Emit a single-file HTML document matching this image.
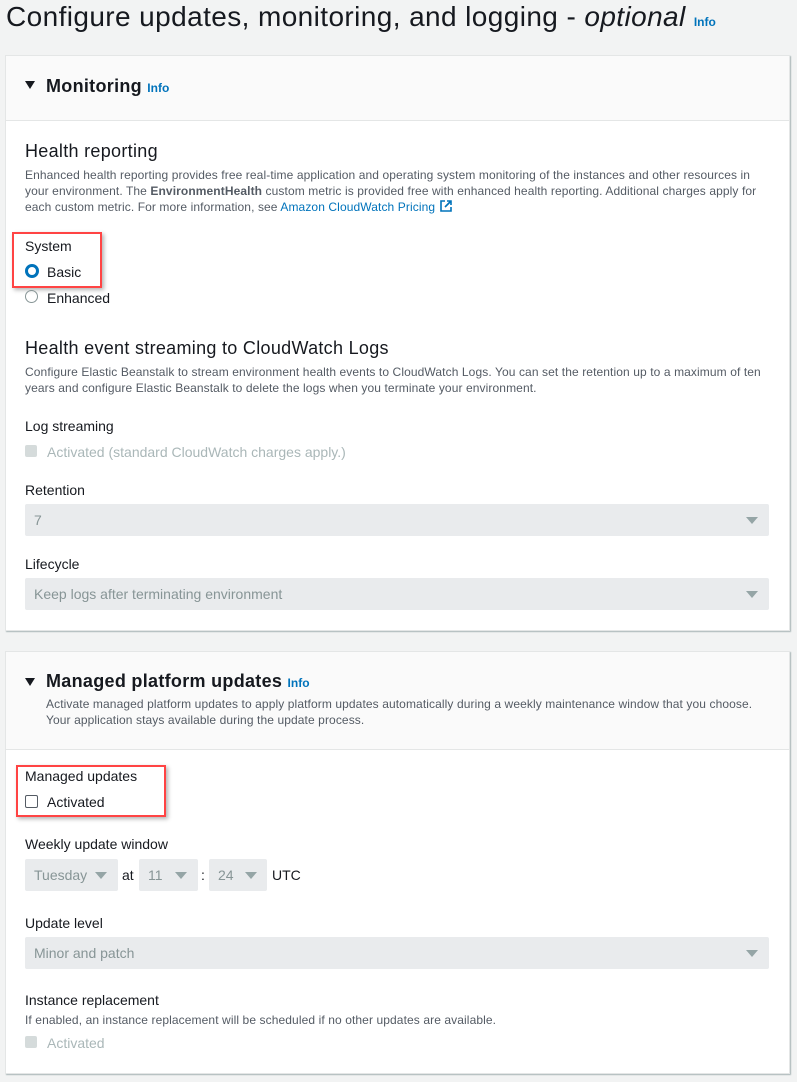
<!DOCTYPE html>
<html><head><style>
body{margin:0;width:797px;height:1082px;background:#f2f3f3;font-family:"Liberation Sans",sans-serif;color:#16191f;position:relative;overflow:hidden}
.a{position:absolute;white-space:nowrap}
.panel{position:absolute;left:5px;width:783px;background:#fff;border:1px solid #e4e6e6;box-shadow:1px 1px 1px #aab7b8}
.hd{position:absolute;left:0;top:0;width:783px;background:#fafafa;border-bottom:1px solid #e4e6e6}
.info{color:#0073bb;font-size:12px;font-weight:bold;letter-spacing:0}
.lbl{font-size:14px}
.desc{font-size:12px;color:#545b64;line-height:16px;letter-spacing:0.1px}
.sel{position:absolute;background:#e9ebed;border-radius:2px;color:#879596;font-size:14px}
.sel span{position:absolute;left:9px;top:8px}
.tri{position:absolute;width:0;height:0;border-left:6px solid transparent;border-right:6px solid transparent;border-top:7px solid #95a5a6}
.red{position:absolute;border:2px solid #f44;box-shadow:2px 2px 4px rgba(0,0,0,.3)}
.cb{position:absolute;width:12px;height:12px;border-radius:2px}
</style></head><body>
<div class="a" style="left:6px;top:0;font-size:28px;line-height:34px;color:#16191f;letter-spacing:0.4px">Configure updates, monitoring, and logging - <i>optional</i> <span class="info" style="font-size:12px">Info</span></div>

<div class="panel" style="top:55px;height:574px">
<div class="hd" style="height:64px"></div>
</div>
<div class="a" style="left:25px;top:81px;width:0;height:0;border-left:5px solid transparent;border-right:5px solid transparent;border-top:8px solid #16191f"></div>
<div class="a" style="left:46px;top:76px;font-size:18px;font-weight:bold;letter-spacing:0.3px">Monitoring <span class="info">Info</span></div>
<div class="a" style="left:25px;top:141px;font-size:18px;letter-spacing:0.3px">Health reporting</div>
<div class="a desc" style="left:25px;top:167px">Enhanced health reporting provides free real-time application and operating system monitoring of the instances and other resources in<br>your environment. The <b>EnvironmentHealth</b> custom metric is provided free with enhanced health reporting. Additional charges apply for<br>each custom metric. For more information, see <span style="color:#0073bb">Amazon CloudWatch Pricing</span> <svg width="14" height="14" viewBox="0 0 14 14" style="vertical-align:-2px"><path d="M6 2H2v10h10V8M8 2h4v4M12 2L6 8" fill="none" stroke="#0073bb" stroke-width="1.6"/></svg></div>
<div class="red" style="left:12px;top:232px;width:86px;height:52px"></div>
<div class="a lbl" style="left:25px;top:238px">System</div>
<div class="a" style="left:25px;top:264px;width:8px;height:8px;border:3px solid #0073bb;border-radius:50%"></div>
<div class="a lbl" style="left:47px;top:264px">Basic</div>
<div class="a" style="left:25px;top:290px;width:11px;height:11px;border:1px solid #879596;border-radius:50%"></div>
<div class="a lbl" style="left:47px;top:290px">Enhanced</div>
<div class="a" style="left:25px;top:338px;font-size:18px;letter-spacing:0.3px">Health event streaming to CloudWatch Logs</div>
<div class="a desc" style="left:25px;top:364px">Configure Elastic Beanstalk to stream environment health events to CloudWatch Logs. You can set the retention up to a maximum of ten<br>years and configure Elastic Beanstalk to delete the logs when you terminate your environment.</div>
<div class="a lbl" style="left:25px;top:418px">Log streaming</div>
<div class="cb" style="left:25px;top:445px;background:#d5dbdb"></div>
<div class="a lbl" style="left:47px;top:444px;color:#aab7b8">Activated (standard CloudWatch charges apply.)</div>
<div class="a lbl" style="left:25px;top:482px">Retention</div>
<div class="sel" style="left:25px;top:504px;width:744px;height:32px"><span>7</span><div class="tri" style="left:721px;top:13px"></div></div>
<div class="a lbl" style="left:25px;top:556px">Lifecycle</div>
<div class="sel" style="left:25px;top:578px;width:744px;height:32px"><span>Keep logs after terminating environment</span><div class="tri" style="left:721px;top:13px"></div></div>

<div class="panel" style="top:651px;height:421px">
<div class="hd" style="height:97px"></div>
</div>
<div class="a" style="left:25px;top:678px;width:0;height:0;border-left:5px solid transparent;border-right:5px solid transparent;border-top:8px solid #16191f"></div>
<div class="a" style="left:46px;top:671px;font-size:18px;font-weight:bold;letter-spacing:0.3px">Managed platform updates <span class="info">Info</span></div>
<div class="a desc" style="left:46px;top:696px">Activate managed platform updates to apply platform updates automatically during a weekly maintenance window that you choose.<br>Your application stays available during the update process.</div>
<div class="red" style="left:16px;top:765px;width:146px;height:48px"></div>
<div class="a lbl" style="left:25px;top:768px">Managed updates</div>
<div class="cb" style="left:25px;top:795px;width:11px;height:11px;border:1px solid #545b64"></div>
<div class="a lbl" style="left:47px;top:794px">Activated</div>
<div class="a lbl" style="left:25px;top:836px">Weekly update window</div>
<div class="sel" style="left:25px;top:859px;width:93px;height:32px"><span>Tuesday</span><div class="tri" style="left:70px;top:13px"></div></div>
<div class="a lbl" style="left:122px;top:867px">at</div>
<div class="sel" style="left:139px;top:859px;width:59px;height:32px"><span>11</span><div class="tri" style="left:36px;top:13px"></div></div>
<div class="a lbl" style="left:201px;top:867px">:</div>
<div class="sel" style="left:209px;top:859px;width:58px;height:32px"><span>24</span><div class="tri" style="left:36px;top:13px"></div></div>
<div class="a lbl" style="left:272px;top:867px">UTC</div>
<div class="a lbl" style="left:25px;top:915px">Update level</div>
<div class="sel" style="left:25px;top:937px;width:744px;height:32px"><span>Minor and patch</span><div class="tri" style="left:721px;top:13px"></div></div>
<div class="a lbl" style="left:25px;top:992px">Instance replacement</div>
<div class="a desc" style="left:25px;top:1012px">If enabled, an instance replacement will be scheduled if no other updates are available.</div>
<div class="cb" style="left:25px;top:1036px;background:#d5dbdb"></div>
<div class="a lbl" style="left:47px;top:1035px;color:#aab7b8">Activated</div>
</body></html>
